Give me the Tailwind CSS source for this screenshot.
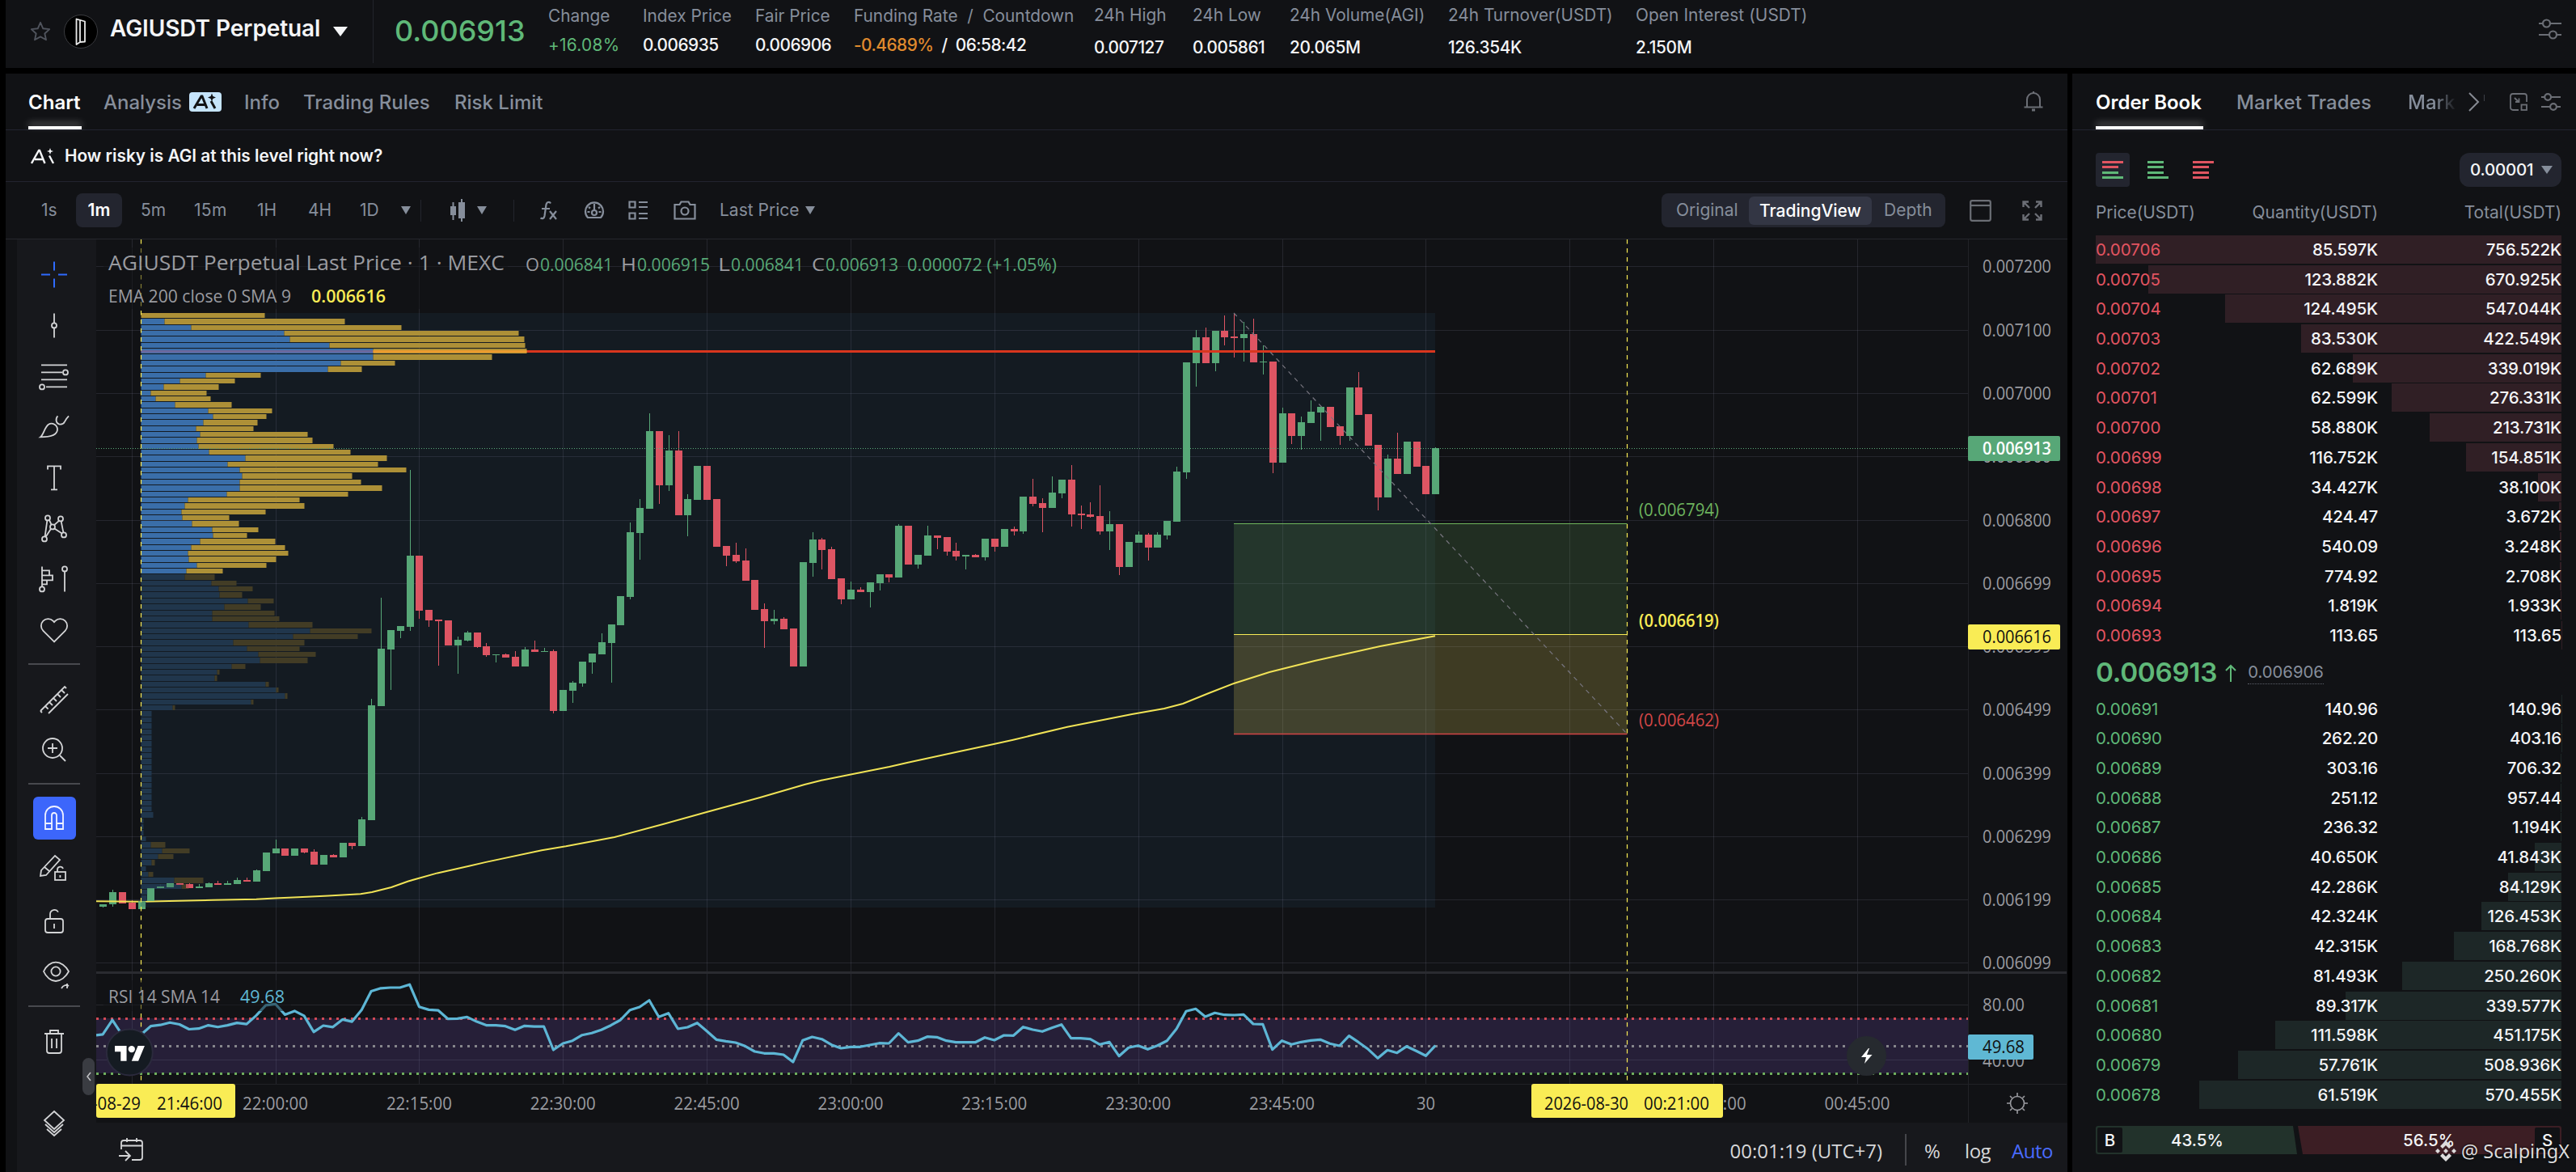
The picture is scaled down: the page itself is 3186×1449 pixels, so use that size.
<!DOCTYPE html>
<html lang="en">
<head>
    <meta charset="UTF-8">
    <meta name="viewport" content="width=device-width, initial-scale=1.0">
    <title>AGIUSDT Perpetual</title>
    <script src="https://cdn.jsdelivr.net/npm/@tailwindcss/browser@4"></script>
</head>
<body class="bg-black text-[#f4f5f7] font-['Inter',sans-serif] w-[3186px] h-[1449px] overflow-hidden">
<div class="flex flex-col h-full pl-[7px]">

    <!-- Header -->
    <header class="flex h-[84px] bg-[#111215] shrink-0 text-[20.8px]">
        <div class="flex items-center w-[455px] h-[78px] border-r border-[#22242b] pl-[29px] shrink-0">
            <svg class="w-[28px] h-[28px] shrink-0" viewBox="0 0 30 30" fill="none" stroke="#50545d" stroke-width="2" stroke-linejoin="round"><path d="M15 3l3.500 8 8.500.9-6.300 5.800 1.800 8.300L15 21.800 7.500 26l1.800-8.300L3 11.900l8.500-.9z"/></svg>
            <svg class="w-[42px] h-[42px] ml-[15px] shrink-0" viewBox="0 0 42 42"><circle cx="21" cy="21" r="20.500" fill="#000" stroke="#3a3b3f"/><path d="M15.500 5.500l4.500 1.500v27l-4.500 3zM15.500 5.500l10.500 3v25l-6 .5M20 34l-4.500 3" fill="none" stroke="#e8e8e8" stroke-width="1.800" stroke-linejoin="round"/></svg>
            <span class="ml-[15px] -mt-[9px] text-[28px] font-semibold tracking-[-0.1px] whitespace-nowrap">AGIUSDT Perpetual</span>
            <svg class="w-[18px] h-[12px] ml-[16px] shrink-0" viewBox="0 0 18 12"><path d="M0 0h18L9 12z" fill="#f4f5f7"/></svg>
        </div>
        <div class="w-[216px] pl-[26px] text-[36px] font-medium text-[#5fb878] leading-[77px] shrink-0">0.006913</div>
        <div class="flex leading-[24px] whitespace-nowrap">
            <div class="w-[117px] pt-[8px]"><p class="text-[#868e9b]">Change</p><p class="mt-[12px] text-[#5fb878] tracking-[0.3px]">+16.08%</p></div>
            <div class="w-[139px] pt-[8px]"><p class="text-[#868e9b]">Index Price</p><p class="mt-[12px] font-medium tracking-[-0.5px]">0.006935</p></div>
            <div class="w-[122px] pt-[8px]"><p class="text-[#868e9b]">Fair Price</p><p class="mt-[12px] font-medium tracking-[-0.5px]">0.006906</p></div>
            <div class="w-[297px] pt-[8px]"><p class="text-[#868e9b]">Funding Rate&nbsp; /&nbsp; Countdown</p><p class="mt-[12px] font-medium tracking-[-0.5px]"><span class="text-[#e08a2e]">-0.4689%</span>&nbsp; /&nbsp; 06:58:42</p></div>
            <div class="w-[122px] pt-[7px]"><p class="text-[#868e9b]">24h High</p><p class="mt-[16px] font-medium tracking-[-0.5px]">0.007127</p></div>
            <div class="w-[120px] pt-[7px]"><p class="text-[#868e9b]">24h Low</p><p class="mt-[16px] font-medium tracking-[-0.5px]">0.005861</p></div>
            <div class="w-[196px] pt-[7px]"><p class="text-[#868e9b]">24h Volume(AGI)</p><p class="mt-[16px] font-medium tracking-[-0.3px]">20.065M</p></div>
            <div class="w-[232px] pt-[7px]"><p class="text-[#868e9b]">24h Turnover(USDT)</p><p class="mt-[16px] font-medium tracking-[-0.3px]">126.354K</p></div>
            <div class="pt-[7px]"><p class="text-[#868e9b] tracking-[0.1px]">Open Interest (USDT)</p><p class="mt-[16px] font-medium tracking-[-0.3px]">2.150M</p></div>
        </div>
        <svg class="w-[28px] h-[28px] ml-auto mr-[18px] mt-[22px]" viewBox="0 0 28 28" fill="none" stroke="#6b6e75" stroke-width="2.200"><path d="M0 7h5M14 7h14M0 21h13M22 21h6"/><circle cx="9.500" cy="7" r="4.500"/><circle cx="17.500" cy="21" r="4.500"/></svg>
    </header>

    <div class="flex mt-[7px] gap-[6px] flex-1 min-h-0">

        <!-- Chart panel -->
        <main class="w-[2550px] bg-[#111215] flex flex-col shrink-0">
            <nav class="flex h-[70px] border-b border-[#22242f] pl-[28px] text-[24px] leading-[71px] text-[#868e9b] shrink-0 whitespace-nowrap">
                <div class="relative text-white font-semibold w-[66px]">Chart
                    <span class="absolute left-0 bottom-0 w-[66px] h-[4px] bg-white shadow-[0_-4px_8px_rgba(255,255,255,0.35)]"></span>
                </div>
                <span class="ml-[27px] w-[99px] font-medium">Analysis</span>
                <svg class="w-[40px] h-[24px] mt-[23px] ml-[7px]" viewBox="0 0 40 24"><rect width="40" height="24" rx="4" fill="#c5e4fb"/><path d="M6 20l9-15h1l6 15M10 15.500h9M27 11l5 9" fill="none" stroke="#111215" stroke-width="3"/><path d="M28 1.500l1.400 3.600L33 6.500l-3.600 1.400L28 11.500l-1.400-3.600L23 6.500l3.600-1.400z" fill="#111215"/></svg>
                <span class="ml-[28px] w-[44px] font-medium">Info</span>
                <span class="ml-[29px] w-[158px] font-medium">Trading Rules</span>
                <span class="ml-[29px] font-medium">Risk Limit</span>
                <svg class="w-[24px] h-[26px] ml-auto mr-[30px] mt-[21px]" viewBox="0 0 24 26" fill="none" stroke="#6b6e75" stroke-width="2"><path d="M4 20v-9a8 8 0 0 1 16 0v9M0.500 20.500h23M12 1v3"/><path d="M10 24h4" stroke-width="3"/></svg>
            </nav>
            <div class="flex items-center h-[64px] border-b border-[#22242f] pl-[31px] text-[20.800px] font-semibold shrink-0">
                <svg class="w-[30px] h-[20px] mr-[12px]" viewBox="0 0 30 20" fill="none" stroke="#f4f5f7" stroke-width="2.400"><path d="M1 19l9-16h1l6.500 16M5 14h10M23 9.500l5 9.500"/><path d="M24 0l1.100 2.900L28 4l-2.900 1.100L24 8l-1.100-2.900L20 4l2.900-1.100z" fill="#f4f5f7" stroke="none"/></svg>
                How risky is AGI at this level right now?
            </div>

            <!-- Chart toolbar -->
            <div class="flex items-center h-[71px] border-b border-[#26272d] text-[21px] text-[#868e9b] shrink-0 whitespace-nowrap">
                <div class="flex items-center pl-[44px]">
                    <span class="w-[43px]">1s</span>
                    <span class="w-[57px] h-[42px] leading-[42px] rounded-lg bg-[#23252f] text-white font-semibold text-center">1m</span>
                    <span class="w-[67px] pl-[23px]">5m</span>
                    <span class="w-[100px] pl-[22px] tracking-[0.3px]">15m</span>
                    <span class="w-[63px]">1H</span>
                    <span class="w-[64px]">4H</span>
                    <span class="w-[51px]">1D</span>
                    <svg class="w-[12px] h-[10px]" viewBox="0 0 12 10"><path d="M0 0h12L6 10z" fill="#868e9b"/></svg>
                    <i class="w-px h-[27px] bg-[#23252d] ml-[12px]"></i>
                    <svg class="w-[20px] h-[28px] ml-[35px]" viewBox="0 0 20 28" fill="#868e9b"><path d="M1 9h7v11H1zM3.500 4h2v22h-2zM11 4h8v20h-8zM14 0h2v28h-2z"/></svg>
                    <svg class="w-[12px] h-[10px] ml-[14px]" viewBox="0 0 12 10"><path d="M0 0h12L6 10z" fill="#868e9b"/></svg>
                    <i class="w-px h-[27px] bg-[#23252d] ml-[33px]"></i>
                    <svg class="w-[22px] h-[24px] ml-[32px]" viewBox="0 0 22 24" fill="none" stroke="#868e9b" stroke-width="2.200"><path d="M13 3.500C12 1.500 8.500 1 7.500 5L5.500 19c-.5 3-3 4-5 2.500M2 10h10M12 13l8 10M20 13l-8 10"/></svg>
                    <svg class="w-[26px] h-[26px] ml-[32px]" viewBox="0 0 26 26" fill="none" stroke="#868e9b" stroke-width="2.200"><path d="M5 22a11 11 0 1 1 16 0z"/><circle cx="13" cy="16" r="3"/><path d="M13 5v8M6 9l2 1.500M20 9l-2 1.500M4.500 15h3M18.500 15h3"/></svg>
                    <svg class="w-[24px] h-[24px] ml-[29px]" viewBox="0 0 24 24" fill="none" stroke="#868e9b" stroke-width="2.200"><path d="M1.500 1.500h7v7h-7zM1.500 15.500h7v7h-7zM13 2h11M13 8h11M13 16h11M13 22h11"/></svg>
                    <svg class="w-[28px] h-[24px] ml-[32px]" viewBox="0 0 28 24" fill="none" stroke="#868e9b" stroke-width="2.200"><path d="M1.500 5h6l2-3.500h9l2 3.500h6v17.500h-25z"/><circle cx="14" cy="13" r="4.500"/></svg>
                    <span class="ml-[29px]">Last Price</span>
                    <svg class="w-[12px] h-[10px] ml-[7px]" viewBox="0 0 12 10"><path d="M0 0h12L6 10z" fill="#868e9b"/></svg>
                </div>
                <div class="flex items-center ml-auto pr-[31px]">
                    <div class="flex items-center w-[351px] h-[42px] rounded-lg bg-[#23252f]">
                        <span class="w-[108px] pl-[18px]">Original</span>
                        <span class="w-[152px] h-[35px] leading-[35px] rounded-md bg-[#333644] text-white font-medium text-center">TradingView</span>
                        <span class="pl-[15px]">Depth</span>
                    </div>
                    <svg class="w-[27px] h-[27px] ml-[30px]" viewBox="0 0 27 27" fill="none" stroke="#6b6e75" stroke-width="2.200"><rect x="1.200" y="1.200" width="24.600" height="24.600" rx="2"/><path d="M1 7h25"/></svg>
                    <svg class="w-[25px] h-[25px] ml-[38px]" viewBox="0 0 25 25" fill="none" stroke="#6b6e75" stroke-width="2.400"><path d="M1.500 8V1.500H8M1.500 1.500l7.500 7.500M17 1.500h6.500V8M23.500 1.500L16 9M1.500 17v6.500H8M1.500 23.500L9 16M17 23.500h6.500V17M23.500 23.500L16 16"/></svg>
                </div>
            </div>

            <div class="flex flex-1 min-h-0 pl-[14px]">
                <!-- Drawing tools -->
                <aside class="relative w-[98px] bg-[#17181c] flex flex-col items-center pt-[12px] shrink-0 pr-[6px]">
                    <svg class="w-[56px] h-[62.800px] shrink-0" viewBox="0 0 28 28" fill="none" stroke="#2f6bff" stroke-width="1"><path d="M14 6v5.500M14 16.500V22M6 14h5.500M16.500 14H22"/></svg>
                    <svg class="w-[56px] h-[62.800px] shrink-0" viewBox="0 0 28 28" fill="none" stroke="#d3d4d6" stroke-width=".9"><path d="M14 6.500v6M14 15.500v6"/><circle cx="14" cy="14" r="1.500"/></svg>
                    <svg class="w-[56px] h-[62.800px] shrink-0" viewBox="0 0 28 28" fill="none" stroke="#d3d4d6" stroke-width=".9"><path d="M6 7h16M6 11.500h13M6 16h16M9 20.500h13"/><circle cx="21" cy="11.500" r="1.500"/><circle cx="6.500" cy="20.500" r="1.500"/></svg>
                    <svg class="w-[56px] h-[62.800px] shrink-0" viewBox="0 0 28 28" fill="none" stroke="#d3d4d6" stroke-width=".9"><path d="M5.500 20.500c2-1.500 2.500-6 5-7.800 2.500-1.500 5.500.5 5.500 3 0 3.500-3.500 4.800-10.500 4.800zM16.200 7.500c-1.500 1.500-1.200 4.500.8 5 2 .5 3-.5 3.500-1.500.8-1.700 1.500-2.500 2.500-3.500"/></svg>
                    <svg class="w-[56px] h-[62.800px] shrink-0" viewBox="0 0 28 28" fill="none" stroke="#d3d4d6" stroke-width=".9"><path d="M10 9V7h8v2M14 7v14.500M12 21.500h4"/></svg>
                    <svg class="w-[56px] h-[62.800px] shrink-0" viewBox="0 0 28 28" fill="none" stroke="#d3d4d6" stroke-width=".9"><circle cx="10" cy="7.500" r="1.500"/><circle cx="18" cy="8" r="1.500"/><circle cx="13" cy="13" r="1.500"/><circle cx="8" cy="20.500" r="1.500"/><circle cx="20" cy="18" r="1.500"/><path d="M9.700 9L8.300 19M11 8.800l1.300 2.800M17 9.200l-3 2.700M18.300 9.500l1.400 7M14.200 14l4.600 3M12 14.200L8.800 19.200"/></svg>
                    <svg class="w-[56px] h-[62.800px] shrink-0" viewBox="0 0 28 28" fill="none" stroke="#d3d4d6" stroke-width=".9"><path d="M6.500 6v12.500M6.500 8.500h4.500v3H6.500M6.500 11.500h6.500v3H6.500M6.500 14.500h3v2.500h-3M20.500 9v12.500"/><circle cx="6.500" cy="20" r="1.500"/><circle cx="20.500" cy="7.500" r="1.500"/></svg>
                    <svg class="w-[56px] h-[62.800px] shrink-0" viewBox="0 0 28 28" fill="none" stroke="#d3d4d6" stroke-width=".9"><path d="M14 21l-6.800-6.800a4.300 4.300 0 0 1 6.100-6.100l.7.8.7-.8a4.300 4.300 0 0 1 6.100 6.100z"/></svg>
                    <i class="w-[64px] h-[2px] bg-[#48494e] mt-[10px] shrink-0"></i>
                    <svg class="w-[56px] h-[56px] mt-[16px] shrink-0" viewBox="0 0 28 28" fill="none" stroke="#d3d4d6" stroke-width=".9"><path d="M5.500 20.500L20.500 5.500l1 1M10.500 22L22.500 10M5.500 20.500l1 1M8.500 17.500l1.800 1.800M11 15l2 2M13.500 12.500l2 2M16 10l2 2M18.500 7.500l2 2"/></svg>
                    <svg class="w-[56px] h-[56px] mt-[4px] shrink-0" viewBox="0 0 28 28" fill="none" stroke="#d3d4d6" stroke-width=".9"><circle cx="13" cy="13.500" r="6"/><path d="M17.500 18l3.500 3.500M13 10.500v6M10 13.500h6"/></svg>
                    <i class="w-[64px] h-[2px] bg-[#48494e] mt-[14px] shrink-0"></i>
                    <div class="w-[53px] h-[53px] mt-[15px] rounded-md bg-[#3c66fb] flex items-center justify-center shrink-0">
                        <svg class="w-[56px] h-[56px] shrink-0" viewBox="0 0 28 28" fill="none" stroke="#f0f2ff" stroke-width=".9"><path d="M8.500 20.500V12a5.500 5.500 0 0 1 11 0v8.500h-4V12a1.500 1.500 0 0 0-3 0v8.500zM8.500 17h4M15.500 17h4"/></svg>
                    </div>
                    <svg class="w-[56px] h-[56px] mt-[7px] shrink-0" viewBox="0 0 28 28" fill="none" stroke="#d3d4d6" stroke-width=".9"><path d="M6 15.500L14.500 6.500l3 2.500L9 18.500l-3.500.5zM8 13.500l3 2.500"/><rect x="14.500" y="16.500" width="6.500" height="5"/><path d="M16 16.500v-1.500a1.800 1.800 0 0 1 3.500-.5M17.700 18.500v1.500"/></svg>
                    <svg class="w-[56px] h-[56px] mt-[10px] shrink-0" viewBox="0 0 28 28" fill="none" stroke="#d3d4d6" stroke-width=".9"><rect x="8.500" y="12.500" width="11" height="8.500" rx="1.500"/><path d="M11.500 12.500V9.500a2.700 2.700 0 0 1 5-1.200M14 15.500v3"/></svg>
                    <svg class="w-[56px] h-[56px] mt-[9px] shrink-0" viewBox="0 0 28 28" fill="none" stroke="#d3d4d6" stroke-width=".9"><path d="M7.500 12.500C9 9 12 6.800 15 6.800s6.200 2.200 8 5.700c-1.800 3.500-5 6-8 6s-6-2.500-7.500-6z"/><circle cx="15" cy="12.500" r="2.800"/><path d="M18.500 23c1-2 3-2.500 4.500-1.500M22 20v3"/></svg>
                    <i class="w-[64px] h-[2px] bg-[#48494e] mt-[11px] shrink-0"></i>
                    <svg class="w-[56px] h-[56px] mt-[14px] shrink-0" viewBox="0 0 28 28" fill="none" stroke="#d3d4d6" stroke-width=".9"><path d="M8 9.500h12M11.500 9.500v-2h5v2M9.500 9.500v10.500a1.500 1.500 0 0 0 1.500 1.500h6a1.500 1.500 0 0 0 1.500-1.500V9.500M12.500 12.500v6M15.500 12.500v6"/></svg>
                    <svg class="w-[56px] h-[56px] mt-[46px] shrink-0" viewBox="0 0 28 28" fill="none" stroke="#d3d4d6" stroke-width=".9"><path d="M14 6.500l6 5.500-6 5.500L8 12zM8.500 14.500l5.500 5 5.500-5M9.500 17.500l4.500 4 4.500-4"/></svg>
                    <div class="absolute right-[2px] top-[1012px] w-[15px] h-[46px] rounded-lg bg-[#3a3c42] flex items-center justify-center">
                        <svg class="w-[6px] h-[12px]" viewBox="0 0 6 12" fill="none" stroke="#c4c5c8" stroke-width="1.500"><path d="M5 1L1 6l4 5"/></svg>
                    </div>
                </aside>

                <div class="flex flex-col flex-1">
                    <svg id="chart" class="w-[2437px] h-[1092px] shrink-0 font-['Open_Sans',sans-serif]" viewBox="119 296 2437 1092"></svg>
                    <div class="flex items-center flex-1 bg-[#17181c] pl-[27px] pr-[18px] pt-[10px] font-['Open_Sans',sans-serif] text-[24px] text-[#d6d7d9] leading-none">
                        <svg class="w-[32px] h-[30px] mt-[-4px]" viewBox="0 0 32 30" fill="none" stroke="#d3d4d6" stroke-width="1.800"><path d="M4 14V6a3 3 0 0 1 3-3h20a3 3 0 0 1 3 3v18a3 3 0 0 1-3 3H17M4 9.500h26M11 0v5M23 0v5M1 22h13M9 16l6 6-6 6"/></svg>
                        <span class="ml-auto pb-[2px]">00:01:19 (UTC+7)</span>
                        <i class="w-[2px] h-[39px] bg-[#45464b] ml-[28px] mt-[-4px]"></i>
                        <span class="ml-[22px] w-[50px] pb-[2px]">%</span>
                        <span class="w-[58px] pb-[2px] font-medium tracking-[-0.5px]">log</span>
                        <span class="text-[#4a6cff] pb-[2px] font-medium tracking-[-0.5px]">Auto</span>
                    </div>
                </div>
            </div>
        </main>

        <!-- Order book -->
        <section class="flex-1 bg-[#111215] flex flex-col">
            <nav class="flex h-[70px] border-b border-[#22242f] pl-[29px] text-[24px] leading-[71px] text-[#868e9b] shrink-0 whitespace-nowrap">
                <div class="relative text-white font-semibold w-[133px]">Order Book
                    <span class="absolute left-0 bottom-0 w-[133px] h-[4px] bg-white shadow-[0_-4px_8px_rgba(255,255,255,0.35)]"></span>
                </div>
                <span class="ml-[41px] w-[169px] font-medium tracking-[0.1px]">Market Trades</span>
                <span class="ml-[43px] w-[61px] font-medium bg-linear-to-r from-[#868e9b] from-55% to-[#111215] bg-clip-text text-transparent">Mark</span>
                <svg class="w-[16px] h-[24px] ml-[13px] mt-[23px]" viewBox="0 0 16 24" fill="none" stroke="#868a92" stroke-width="2"><path d="M2 1l11 11L2 23"/></svg>
                <i class="w-px h-[8px] bg-[#3d4047] ml-[4px] mt-[26px]"></i>
                <svg class="w-[22px] h-[22px] ml-[31px] mt-[24px]" viewBox="0 0 22 22" fill="none" stroke="#6b6e75" stroke-width="1.800"><path d="M11 21H4a3 3 0 0 1-3-3V4a3 3 0 0 1 3-3h14a3 3 0 0 1 3 3v7M6 6l5 5M11.500 6.500V11H7"/><rect x="14.500" y="14.500" width="6.500" height="6.500"/></svg>
                <svg class="w-[24px] h-[24px] ml-[17px] mt-[23px]" viewBox="0 0 28 28" fill="none" stroke="#6b6e75" stroke-width="2.500"><path d="M0 7h5M14 7h14M0 21h13M22 21h6"/><circle cx="9.500" cy="7" r="4.500"/><circle cx="17.500" cy="21" r="4.500"/></svg>
            </nav>
            <div class="flex items-center h-[42px] mt-[28px] pl-[29px] pr-[18px] shrink-0">
                <div class="w-[42px] h-[42px] bg-[#23252f] rounded-[4px] flex items-center justify-center">
                    <svg class="w-[26px] h-[22px]" viewBox="0 0 26 22"><path d="M0 0h26v3H0zM0 6h20v3H0z" fill="#e05561"/><path d="M0 13h20v3H0zM0 19h26v3H0z" fill="#5fb878"/></svg>
                </div>
                <svg class="w-[26px] h-[22px] ml-[22px]" viewBox="0 0 26 22"><path d="M0 0h20v3H0zM0 6h20v3H0zM0 13h20v3H0zM0 19h26v3H0z" fill="#5fb878"/></svg>
                <svg class="w-[26px] h-[22px] ml-[30px]" viewBox="0 0 26 22"><path d="M0 0h26v3H0zM0 6h20v3H0zM0 13h20v3H0zM0 19h20v3H0z" fill="#e05561"/></svg>
                <div class="ml-auto flex items-center w-[126px] h-[42px] rounded-xl bg-[#23252f] pl-[13px] text-[20.500px] font-medium tracking-[-0.2px]">0.00001
                    <svg class="w-[14px] h-[10px] ml-[10px]" viewBox="0 0 14 10"><path d="M0 0h14L7 10z" fill="#868e9b"/></svg>
                </div>
            </div>
            <div class="grid grid-cols-[120px_229px_227px] h-[60px] pl-[29px] leading-[64px] text-[20.900px] text-[#868e9b] shrink-0 whitespace-nowrap">
                <span>Price(USDT)</span><span class="text-right">Quantity(USDT)</span><span class="text-right">Total(USDT)</span>
            </div>
            <div id="asks" class="pl-[29px] pr-[18px] shrink-0"></div>
            <div class="flex items-center h-[54px] pl-[29px] text-[#5fb878] shrink-0">
                <span class="text-[33.300px] font-semibold tracking-[-0.300px]">0.006913</span>
                <svg class="w-[14px] h-[22px] ml-[10px]" viewBox="0 0 14 22" fill="none" stroke="#5fb878" stroke-width="2"><path d="M7 22V2M1 8l6-6 6 6"/></svg>
                <span class="ml-[14px] text-[20.300px] text-[#868e9b] leading-[28px] border-b border-dotted border-[#5a5f69]">0.006906</span>
            </div>
            <div id="bids" class="pl-[29px] pr-[18px] shrink-0"></div>

            <div class="relative flex mx-[29px] mr-[18px] mt-[20px] h-[35px] text-[20.500px] font-medium leading-[35px]">
                <svg class="absolute inset-0 w-[576px] h-[35px]" viewBox="0 0 576 35"><path d="M3 0h241l5 35H3a3 3 0 0 1-3-3V3a3 3 0 0 1 3-3z" fill="#22322b"/><path d="M250 0h323a3 3 0 0 1 3 3v29a3 3 0 0 1-3 3H256z" fill="#3c1e24"/></svg>
                <span class="relative w-[31px] h-[31px] m-[2px] leading-[31px] bg-[#111215] text-center rounded-[2px]">B</span>
                <span class="relative ml-[58px]">43.5%</span>
                <span class="relative ml-auto mr-[97px]">56.5%</span>
                <span class="relative w-[31px] h-[31px] m-[2px] leading-[31px] bg-[#111215] text-center rounded-[2px]">S</span>
                <div class="absolute left-[420px] top-[16px] flex items-center h-[30px] font-['Noto_Sans',sans-serif] font-normal text-[23.500px] text-[#dcdcdc] whitespace-nowrap [text-shadow:0_0_3px_#000]">
                    <svg class="w-[26px] h-[26px] mr-[6px]" viewBox="0 0 26 26" fill="#dcdcdc"><path d="M13 0l7 7-3 3-4-4-4 4-3-3zM13 26l7-7-3-3-4 4-4-4-3 3zM13 10l3 3-3 3-3-3zM3 10l3 3-3 3-3-3zM23 10l3 3-3 3-3-3z"/></svg>
                    <span>@ ScalpingX</span>
                </div>
            </div>
        </section>
    </div>
</div>

<script>
    // ---------- order book ----------
    const asks = [
        ['0.00706', '85.597K', '756.522K'], ['0.00705', '123.882K', '670.925K'], ['0.00704', '124.495K', '547.044K'],
        ['0.00703', '83.530K', '422.549K'], ['0.00702', '62.689K', '339.019K'], ['0.00701', '62.599K', '276.331K'],
        ['0.00700', '58.880K', '213.731K'], ['0.00699', '116.752K', '154.851K'], ['0.00698', '34.427K', '38.100K'],
        ['0.00697', '424.47', '3.672K'], ['0.00696', '540.09', '3.248K'], ['0.00695', '774.92', '2.708K'],
        ['0.00694', '1.819K', '1.933K'], ['0.00693', '113.65', '113.65']
    ];
    const bids = [
        ['0.00691', '140.96', '140.96'], ['0.00690', '262.20', '403.16'], ['0.00689', '303.16', '706.32'],
        ['0.00688', '251.12', '957.44'], ['0.00687', '236.32', '1.194K'], ['0.00686', '40.650K', '41.843K'],
        ['0.00685', '42.286K', '84.129K'], ['0.00684', '42.324K', '126.453K'], ['0.00683', '42.315K', '168.768K'],
        ['0.00682', '81.493K', '250.260K'], ['0.00681', '89.317K', '339.577K'], ['0.00680', '111.598K', '451.175K'],
        ['0.00679', '57.761K', '508.936K'], ['0.00678', '61.519K', '570.455K']
    ];
    function amount(s) {
        return s.endsWith('K') ? parseFloat(s) : parseFloat(s) / 1000;
    }
    function renderBook(id, rows, max, color, bar) {
        document.getElementById(id).innerHTML = rows.map(r => `
            <div class="relative h-[36.700px] text-[20.500px] leading-[35px]">
                <div class="absolute right-0 top-0 h-[35px] ${bar}" style="width:${amount(r[2]) / max * 100}%"></div>
                <div class="relative flex">
                    <span class="w-[120px] ${color}">${r[0]}</span>
                    <span class="w-[229px] text-right font-medium tracking-[-0.150px]">${r[1]}</span>
                    <span class="w-[227px] text-right font-medium tracking-[-0.150px]">${r[2]}</span>
                </div>
            </div>`).join('');
    }
    renderBook('asks', asks, 756.522, 'text-[#e35461]', 'bg-[#301f25]');
    renderBook('bids', bids, 733.5, 'text-[#5fb878]', 'bg-[#1d2727]');

    // ---------- chart ----------
    const GREEN = '#57a777', RED = '#dd5563', YELLOW = '#f9ec55';
    const X = k => 162.7 + 11.857 * k;   // minute index, 0 = 21:45
    const out = [];
    const rect = (x, y, w, h, fill, extra = '') => out.push(`<rect x="${x}" y="${y}" width="${w}" height="${h}" fill="${fill}" ${extra}/>`);
    const line = (x1, y1, x2, y2, stroke, w = 1, dash = '', extra = '') => out.push(`<line x1="${x1}" y1="${y1}" x2="${x2}" y2="${y2}" stroke="${stroke}" stroke-width="${w}" stroke-dasharray="${dash}" ${extra}/>`);
    // text centred vertically on cy; len is the drawn width
    const text = (x, cy, s, fill, size, len, extra = '') => out.push(`<text x="${x}" y="${cy + size * 0.357}" fill="${fill}" font-size="${size}" textLength="${len}" lengthAdjust="spacingAndGlyphs" ${extra}>${s}</text>`);

    rect(119, 296, 2437, 1092, '#111215');
    rect(174.5, 387, 1600.5, 735, '#141b22');
    rect(119, 1259, 2315, 68, '#261f38');

    // grid
    const GRID = 'stroke-opacity="0.16"';
    for (let i = 0; i < 13; i++) {
        const x = Math.round(X(i * 15)) + 0.5;
        line(x, 296, x, 1340, '#8c8caf', 1, '', GRID);
    }
    const gridY = [329.5, 408.5, 486.5, 564.5, 643.5, 721.5, 799.5, 877.5, 956.5, 1034.5, 1112.5, 1190.5, 1242.5, 1310.5];
    gridY.forEach(y => line(119, y, 2434, y, '#8c8caf', 1, '', GRID));

    // [direction, body top, body bottom, high, low]; first candle is 21:42
    const candles = [
        [1,1118,1121,1118,1122],[1,1103,1118,1100,1121],[0,1103,1117,1103,1117],[0,1116,1124,1113,1124],[1,1114,1124,1114,1124],
        [1,1098,1114,1098,1114],[1,1096,1098,1093,1099],[1,1092,1097,1092,1097],[0,1092,1094,1091,1094],[0,1093,1098,1092,1098],
        [1,1096,1098,1093,1098],[1,1092,1097,1091,1097],[0,1092,1094,1089,1094],[1,1092,1094,1089,1094],[1,1088,1093,1085,1093],
        [0,1088,1090,1085,1090],[1,1076,1090,1075,1090],[1,1054,1077,1054,1077],[1,1049,1055,1038,1055],[0,1049,1058,1049,1058],
        [1,1049,1058,1049,1058],[0,1049,1054,1049,1055],[0,1053,1069,1050,1069],[1,1057,1069,1057,1069],[0,1057,1060,1056,1060],
        [1,1042,1060,1042,1060],[0,1042,1046,1042,1050],[1,1013,1046,1010,1046],[1,872,1014,864,1014],[1,802,873,739,873],
        [1,779,803,779,853],[1,774,780,774,789],[1,687,775,581,780],[0,687,755,687,765],[0,754,767,754,775],
        [0,766,768,766,823],[0,767,798,767,798],[1,791,798,787,833],[1,782,792,780,793],[0,782,800,782,801],
        [0,799,810,795,812],[1,809,810,809,819],[0,809,813,808,813],[0,812,824,805,824],[1,803,824,800,824],
        [0,803,806,792,806],[1,805,806,801,806],[0,805,879,803,882],[1,853,879,853,879],[1,844,854,842,869],
        [1,818,845,818,849],[1,808,819,808,833],[1,794,809,783,809],[1,772,795,772,844],[1,737,773,737,773],
        [1,658,738,646,741],[1,628,659,617,692],[1,533,629,511,629],[0,533,600,533,623],[1,557,600,538,607],
        [0,557,637,533,637],[1,617,637,611,663],[1,576,618,576,618],[0,576,618,576,618],[0,617,676,617,676],
        [0,675,687,675,700],[0,686,694,671,696],[0,693,718,678,718],[0,717,754,717,754],[0,753,768,746,801],
        [1,765,768,754,772],[0,765,778,763,778],[0,777,824,777,824],[1,695,824,695,824],[1,667,696,658,713],
        [0,667,680,665,704],[0,679,716,676,716],[0,715,741,715,747],[1,729,741,719,741],[0,729,732,726,732],
        [1,720,732,720,751],[1,710,721,710,730],[0,710,714,710,720],[1,650,714,648,714],[0,650,698,650,698],
        [1,686,698,686,703],[1,662,687,650,687],[0,662,665,662,679],[0,664,682,664,687],[0,681,688,671,693],
        [1,686,688,686,704],[0,686,689,685,689],[1,666,689,666,693],[0,666,676,666,682],[1,654,676,654,676],
        [0,654,657,651,662],[1,614,657,614,660],[0,614,623,592,626],[0,622,628,616,658],[1,609,628,589,628],
        [1,593,610,593,616],[0,593,636,575,651],[0,635,637,625,654],[0,636,639,621,640],[0,638,657,600,661],
        [1,648,657,632,680],[0,648,701,648,711],[1,670,701,670,701],[1,661,671,657,671],[0,661,677,659,693],
        [1,661,677,658,677],[1,644,662,644,667],[1,583,645,577,645],[1,448,584,448,592],[1,417,449,408,478],
        [0,417,449,405,449],[1,409,449,409,459],[0,409,417,390,427],[0,416,418,387,442],[1,413,418,398,447],
        [0,413,448,394,448],[1,447,448,427,463],[0,447,572,447,585],[1,511,572,504,572],[0,511,539,511,549],
        [1,522,539,515,556],[1,509,523,495,523],[1,503,510,503,545],[0,503,528,503,528],[0,527,539,527,550],
        [1,479,539,479,545],[0,479,513,460,513],[0,512,551,512,551],[0,550,615,550,631],[1,567,615,562,615],
        [0,567,586,535,586],[1,546,586,546,586],[0,546,577,546,577],[0,576,611,576,611],[1,554,611,553,611]
    ];
    candles.forEach(([up, top, bottom, hi, lo], i) => {
        const cx = Math.round(X(i - 3)), c = up ? GREEN : RED;
        rect(cx, hi, 1, lo - hi, c);
        rect(cx - 4, top, 9, Math.max(1, bottom - top), c);
    });

    // EMA 200
    const ema = [[119,1114.3],[174.5,1114.7],[263,1112.8],[317,1111.7],[340,1110.6],[380,1108.7],[406,1107.6],[446,1105.3],[460,1103],[484,1097],[505,1089.5],[541,1079.4],[580,1070.7],[601,1065.9],[670,1051.2],[700,1046.3],[760,1035],[820,1019],[874,1004],[940,986],[995,970],[1016,964.7],[1051,957.7],[1100,948],[1123,942.7],[1182,930],[1229,920],[1253,914.7],[1320,898.7],[1400,883],[1440,876],[1463,870],[1495,857],[1526,845],[1570,831],[1626,817],[1707,799],[1775,786.3]];
    out.push(`<polyline points="${ema.map(p => p.join()).join(' ')}" fill="none" stroke="#f0e356" stroke-width="2"/>`);

    // point of control
    rect(174.5, 433, 1600.5, 3, '#d9361e');

    // volume profile: [buy width, total width]
    const profile = [
        [0,153],[29,252],[62,322],[177,467],[184,474],[233,475],[287,477],[287,434],[247,314],[231,273],
        [80,148],[48,116],[28,96],[12,81],[18,86],[42,112],[83,162],[89,155],[77,144],[68,139],
        [73,206],[69,212],[71,238],[84,259],[129,304],[107,293],[122,328],[125,261],[122,272],[122,298],
        [106,256],[58,196],[54,202],[50,154],[51,109],[63,121],[88,145],[89,131],[73,166],[62,178],
        [58,182],[59,167],[69,155],[56,101],[54,91],[87,118],[96,138],[97,125],[132,164],[103,148],
        [88,165],[88,171],[133,212],[209,285],[188,268],[114,202],[131,196],[145,216],[147,206],[112,129],
        [94,97],[91,94],[154,158],[167,170],[178,181],[136,139],[39,42]
    ];
    for (let i = 0; i < 17; i++) profile.push([13, 13]);
    profile.push([15,15],[3,3],[3,3],[3,3],[6,6],[12,30],[26,60],[21,40],[13,17],[6,6],[9,15],[41,77],[50,59],[8,8],[7,7],[6,6]);
    profile.forEach(([buy, total], i) => {
        const y = Math.round(387 + i * 7.35), h = Math.round(387 + (i + 1) * 7.35) - y - 1;
        const dim = i > 43;
        rect(174.5, y, buy, h, dim ? '#213850' : '#3a6ea9', dim ? 'opacity="0.93"' : '');
        rect(174.5 + buy, y, total - buy, h, dim ? '#463e26' : '#ad9037', dim ? 'opacity="0.93"' : '');
    });
    rect(174.5, 433, 287, 3, '#6a689e');
    rect(461.5, 433, 190, 3, '#eb9b2f');

    // the first candles stay visible over the profile
    candles.slice(4, 11).forEach(([up, top, bottom], i) => rect(Math.round(X(i + 1)) - 4, top, 9, bottom - top, up ? GREEN : RED, 'opacity="0.8"'));

    // long position
    rect(1526, 647, 486.5, 137, '#6fb35d', 'opacity="0.18"');
    rect(1526, 784, 486.5, 123, '#f7df60', 'opacity="0.2"');
    line(1526, 647.5, 2012.5, 647.5, '#6fb65c', 1.2);
    line(1526, 784.5, 2012.5, 784.5, YELLOW, 1.2);
    line(1526, 907.5, 2012.5, 907.5, '#d24646', 1.4);
    line(1526, 387, 2012, 907, '#77757f', 1.2, '5.500 5.500');
    text(2027, 630, '(0.006794)', '#6db35e', 22, 99);
    text(2027, 767, '(0.006619)', YELLOW, 22, 99, 'font-weight="600"');
    text(2027, 890, '(0.006462)', '#d24646', 22, 99);

    // last price and vertical markers
    line(119, 554.5, 2434, 554.5, '#5aab7a', 1, '1 2');
    line(174.5, 296, 174.5, 1340, YELLOW, 1.2, '5.500 5.500');
    line(2012.5, 296, 2012.5, 1340, YELLOW, 1.2, '5.500 5.500');
    rect(128, 306, 500, 76, '#111215', 'opacity="0.5"');

    // RSI, first value 21:41
    const rsi = [1279.8,1278.9,1261.2,1279,1282,1279,1268.7,1267.2,1264.2,1266.5,1272.5,1271.7,1267.6,1269.8,1267.6,1264.6,1266.1,1255.6,1242.8,1241.3,1254.4,1249.9,1255.9,1275.8,1268,1269.8,1260.4,1263.1,1248.4,1225.5,1221.8,1221,1221,1217.2,1244.7,1248.4,1249.2,1259.7,1259.3,1257.4,1263.1,1267.6,1267.6,1268.7,1273.2,1268.3,1269.1,1269.1,1298,1290,1286.7,1279.7,1277.3,1273.3,1267.7,1261,1248.7,1245,1236.7,1257.3,1252.7,1272,1270,1264.7,1274.7,1285.3,1287.3,1289,1293.3,1300,1302.3,1302.3,1304,1313,1286.3,1282,1284.7,1291.7,1296,1294.3,1294.3,1292,1289.7,1290,1277.7,1288.7,1286.7,1281.7,1282.3,1286.7,1288.7,1288.7,1288.7,1282.7,1286,1280,1280.3,1269.7,1273,1275.3,1270.7,1266.7,1283.7,1283.7,1284.7,1291.3,1288.3,1305.7,1295.3,1292.7,1297.3,1292.7,1286.7,1272,1250.3,1247.3,1257,1252.3,1254.7,1255,1254.3,1266,1266.3,1297.7,1286.7,1291.3,1288.3,1286.3,1285.3,1290.3,1293,1280.7,1288.7,1297.3,1308.3,1298.3,1301.7,1293.7,1299.3,1305.3,1292.7];
    line(119, 1259.5, 2434, 1259.5, '#d24a55', 3, '3 6');
    line(119, 1293.5, 2434, 1293.5, '#86868c', 3, '3 6');
    line(119, 1327.5, 2434, 1327.5, '#6fae5e', 3, '3 6');
    out.push(`<polyline points="${rsi.map((y, i) => Math.max(119, X(i - 4)).toFixed(1) + ',' + y).join(' ')}" fill="none" stroke="#5db6d5" stroke-width="3.200" stroke-linejoin="round"/>`);
    rect(128, 1212, 232, 38, '#111215', 'opacity="0.5"');

    // legends
    text(134, 324.5, 'AGIUSDT Perpetual Last Price · 1 · MEXC', '#9a9ba0', 26, 490);
    [['O', 650, '0.006841', 758], ['H', 768, '0.006915', 878], ['L', 888, '0.006841', 994], ['C', 1004, '0.006913', 1111]].forEach(([l, x, v, end]) => {
        text(x, 327, l, '#9a9ba0', 22, end - x - 91);
        text(end - 90, 327, v, GREEN, 22, 90);
    });
    text(1122, 327, '0.000072 (+1.05%)', GREEN, 22, 185);
    text(134, 366, 'EMA 200 close 0 SMA 9', '#9a9ba0', 22, 226);
    text(385, 366, '0.006616', YELLOW, 22, 92, 'font-weight="600"');
    text(134, 1232, 'RSI 14 SMA 14', '#9a9ba0', 22, 138);
    text(297, 1232, '49.68', '#5fb8d4', 22, 55);

    // price axis
    line(2434.5, 296, 2434.5, 1388, '#212227');
    line(119, 1202.5, 2556, 1202.5, '#2a2b30', 3);
    line(119, 1340.5, 2556, 1340.5, '#212227');
    ['0.007200', '0.007100', '0.007000', '0.006900', '0.006800', '0.006699', '0.006599', '0.006499', '0.006399', '0.006299', '0.006199', '0.006099'].forEach((s, i) => text(2452, gridY[i], s, '#9a9ba0', 22, 85));
    text(2452, 1242.5, '80.00', '#9a9ba0', 22, 52);
    text(2452, 1311, '40.00', '#9a9ba0', 22, 52);
    rect(2434, 539, 114, 31, GREEN, 'rx="2"');
    text(2452, 554.5, '0.006913', '#fff', 22, 85, 'font-weight="600"');
    rect(2434, 772, 114, 31, YELLOW, 'rx="2"');
    text(2452, 787.5, '0.006616', '#111', 22, 85, 'font-weight="500"');
    rect(2434, 1279, 81, 31, '#5fb8d4', 'rx="2"');
    text(2452, 1294.5, '49.68', '#111', 22, 52, 'font-weight="500"');

    // time axis
    ['22:00:00', '22:15:00', '22:30:00', '22:45:00', '23:00:00', '23:15:00', '23:30:00', '23:45:00', '30', '', '00:30:00', '00:45:00'].forEach((s, i) => {
        const w = s.length > 2 ? 81 : 23;
        if (s) text(X((i + 1) * 15) - w / 2, 1364.5, s, '#9a9ba0', 22, w);
    });
    rect(119, 1340, 172, 42, YELLOW, 'rx="3"');
    text(114, 1364.5, '-08-29', '#111', 22, 60, 'font-weight="500"');
    text(194, 1364.5, '21:46:00', '#111', 22, 81, 'font-weight="500"');
    rect(1894, 1340, 237, 42, YELLOW, 'rx="3"');
    text(1910, 1364.5, '2026-08-30', '#111', 22, 104, 'font-weight="500"');
    text(2033, 1364.5, '00:21:00', '#111', 22, 81, 'font-weight="500"');

    // logo, quick trade button, axis settings
    out.push('<circle cx="160.300" cy="1301" r="28.500" fill="#151b22" stroke="#2b2a3d" stroke-width="2"/>');
    out.push('<g transform="translate(142 1288.800) scale(1.040)" fill="#fff"><path d="M14 22H7V11H0V4h14v18zM28 22h-8l7.500-18h8L28 22z"/><circle cx="20" cy="8" r="4"/></g>');
    out.push('<circle cx="2308.500" cy="1305.500" r="24.500" fill="#262a2f"/><path d="M2311 1296l-9 11h6l-2 8 9.500-11h-6.500l3-8z" fill="#fff"/>');
    out.push('<g fill="none" stroke="#9a9ba0" stroke-width="1.600"><circle cx="2495" cy="1364" r="8.500"/><path d="M2495 1351v4M2495 1373v4M2482 1364h4M2504 1364h4M2486 1355l2.500 2.500M2501.500 1370.500l2.500 2.500M2486 1373l2.500-2.500M2501.500 1357.500l2.500-2.500"/></g>');

    document.getElementById('chart').innerHTML = out.join('');
</script>
</body>
</html>
